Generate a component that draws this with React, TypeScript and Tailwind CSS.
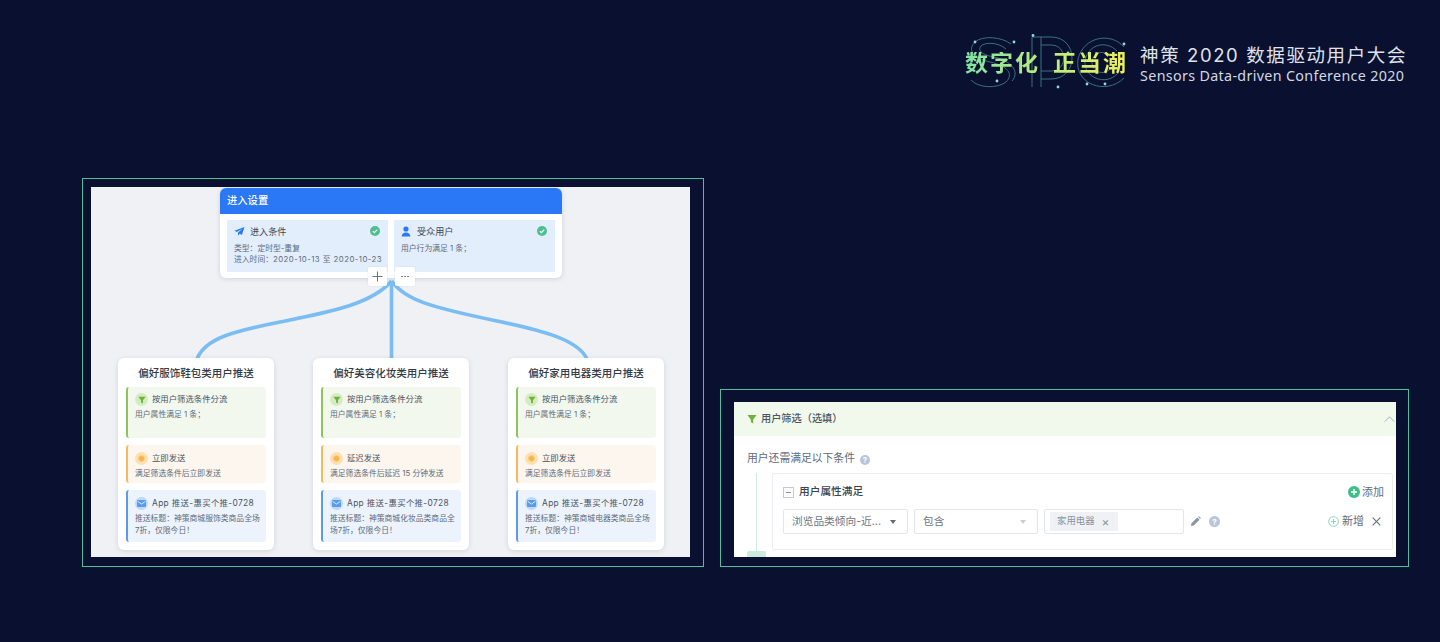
import React from "react";

const FONT = "font-['Inter','Noto_Sans_CJK_SC',sans-serif]";

function Funnel({ className }: { className: string }) {
  return (
    <svg viewBox="0 0 10 10" className={className}>
      <path d="M0.5 1h9L6.2 5.4V9.5L3.8 8V5.4z" fill="currentColor" />
    </svg>
  );
}

function Check() {
  return (
    <svg viewBox="0 0 10 10" className="w-[10px] h-[10px]">
      <circle cx="5" cy="5" r="5" fill="#4cbf8d" />
      <path d="M2.8 5.1l1.6 1.6 2.9-3" stroke="#fff" strokeWidth="1.1" fill="none" />
    </svg>
  );
}

function Help({ size }: { size: string }) {
  return (
    <span className={`${size} rounded-full bg-[#b9c5da] text-white flex items-center justify-center text-[8px] font-bold leading-none`}>
      ?
    </span>
  );
}

function Caret({ color }: { color: string }) {
  return (
    <svg viewBox="0 0 6 4" className="w-[6px] h-[4px]">
      <path d="M0 0h6L3 4z" fill={color} />
    </svg>
  );
}

function Entry({
  icon,
  title,
  lines,
}: {
  icon: React.ReactNode;
  title: string;
  lines: React.ReactNode[];
}) {
  return (
    <div className="w-[161px] h-[52px] bg-[#e3eefc] px-[7px] pt-[5px]">
      <div className="flex items-center h-[13px]">
        <span className="w-[16px] flex justify-start">{icon}</span>
        <span className="text-[9.1px] text-[#3d4654] leading-none">{title}</span>
        <span className="ml-auto mr-[1px] -mt-[1px]"><Check /></span>
      </div>
      <div className="mt-[5px] text-[7.8px] leading-[11px] text-[#5f6b7a] whitespace-nowrap">
        {lines.map((l, i) => (
          <div key={i}>{l}</div>
        ))}
      </div>
    </div>
  );
}

function Step({
  tone,
  height,
  icon,
  title,
  desc,
}: {
  tone: "green" | "orange" | "blue";
  height: string;
  icon: React.ReactNode;
  title: React.ReactNode;
  desc: string;
}) {
  const box =
    tone === "green"
      ? "bg-[#f3f8ee] border-[#8ec45c] pt-[6px]"
      : tone === "orange"
      ? "bg-[#fdf6ee] border-[#f5b95c] pt-[7px]"
      : "bg-[#ecf3fc] border-[#5c9be8] pt-[7px]";
  const circle =
    tone === "green" ? "bg-[#d5ecc2]" : tone === "orange" ? "bg-[#fde0b0]" : "bg-[#bcd8fa]";
  return (
    <div className={`${height} ${box} border-l-2 rounded-[3px] pl-[7px] pr-[4px]`}>
      <div className="flex items-center h-[13px]">
        <span className={`w-[13px] h-[13px] rounded-full flex items-center justify-center ${circle}`}>{icon}</span>
        <span className="ml-[4px] text-[8.4px] leading-none text-[#4a5462] whitespace-nowrap">{title}</span>
      </div>
      <div className="mt-[2px] w-[127px] text-[7.8px] leading-[12px] text-[#5f6b7a]">{desc}</div>
    </div>
  );
}

const FunnelIcon = <Funnel className="w-[8px] h-[8px] text-[#6fb23a]" />;
const DotIcon = (
  <span className="w-[7px] h-[7px] rounded-full bg-[#f6b44a] border border-[#f9cf87]" />
);
const MailIcon = (
  <svg viewBox="0 0 9 7" className="w-[9px] h-[7px]">
    <rect width="9" height="7" rx="1" fill="#5c9be8" />
    <path d="M0.6 1.4L4.5 4l3.9-2.6" stroke="#fff" strokeWidth="0.8" fill="none" />
  </svg>
);

function Branch({ title, send, sendDesc, push }: { title: string; send: string; sendDesc: string; push: string }) {
  return (
    <div className="w-[156px] h-[192px] bg-white rounded-[6px] shadow-[0_1px_5px_rgba(60,70,90,0.16)] px-[8px]">
      <div className="h-[29px] pt-[2px] flex items-center justify-center text-[10.5px] font-medium text-[#333b47] whitespace-nowrap">
        {title}
      </div>
      <div className="flex flex-col gap-[7px]">
        <Step tone="green" height="h-[51px]" icon={FunnelIcon} title="按用户筛选条件分流" desc="用户属性满足 1 条；" />
        <Step tone="orange" height="h-[38px]" icon={DotIcon} title={send} desc={sendDesc} />
        <Step
          tone="blue"
          height="h-[52px]"
          icon={MailIcon}
          title={<span className="tracking-[0.35px]">App 推送-惠买个推-0728</span>}
          desc={push}
        />
      </div>
    </div>
  );
}

function Flow() {
  return (
    <div className="relative w-[599px] h-[370px] bg-[#eff1f5] overflow-hidden pt-[1px]">
      <svg viewBox="91 187 599 370" className="absolute inset-0 w-[599px] h-[370px]" fill="none" stroke="#7bbdf3" strokeWidth="3.6">
        <path d="M391.5 281C372 304 330 312 280 322C235 331 205 338 197 359" />
        <path d="M391.5 281V359" />
        <path d="M391.5 281C405 300 430 307 497 321C545 331 578 340 587 359" />
      </svg>
      <div className="relative ml-[129px] w-[342px] h-[90px] bg-white rounded-[6px] shadow-[0_1px_5px_rgba(60,70,90,0.18)]">
        <div className="h-[26px] bg-[#2b78f6] rounded-t-[6px] px-[7px] flex items-center text-[10.3px] font-medium text-white">
          进入设置
        </div>
        <div className="flex gap-[6px] px-[7px] pt-[6px]">
          <Entry
            icon={
              <svg viewBox="0 0 12 10" className="w-[11px] h-[9px]">
                <path d="M11.5 0L0.5 4.2l2.6 1.4L9 2 4.3 6.4V9.6l1.9-2.2 2.5 1.5z" fill="#2b78f6" />
              </svg>
            }
            title="进入条件"
            lines={[
              "类型：定时型-重复",
              <>
                进入时间：<span className="tracking-[0.45px]">2020-10-13 至 2020-10-23</span>
              </>,
            ]}
          />
          <Entry
            icon={
              <svg viewBox="0 0 10 11" className="w-[10px] h-[11px]">
                <circle cx="5" cy="3" r="2.6" fill="#2b78f6" />
                <path d="M0.6 10.5C0.8 7.6 2.6 6.4 5 6.4s4.2 1.2 4.4 4.1z" fill="#2b78f6" />
              </svg>
            }
            title="受众用户"
            lines={["用户行为满足 1 条；"]}
          />
        </div>
        <div className="absolute left-[148px] top-[79px] w-[19px] h-[19px] bg-white rounded-[2px] flex items-center justify-center shadow-[0_0_2px_rgba(60,70,90,0.12)]">
          <svg viewBox="0 0 11 11" className="w-[11px] h-[11px]">
            <path d="M5.5 0.5v10M0.5 5.5h10" stroke="#6b7583" strokeWidth="1" />
          </svg>
        </div>
        <div className="absolute left-[175px] top-[79px] w-[20px] h-[19px] bg-white rounded-[2px] flex items-center justify-center gap-[1.5px] shadow-[0_0_2px_rgba(60,70,90,0.12)]">
          <span className="w-[1.5px] h-[1.5px] bg-[#6b7583] rounded-full" />
          <span className="w-[1.5px] h-[1.5px] bg-[#6b7583] rounded-full" />
          <span className="w-[1.5px] h-[1.5px] bg-[#6b7583] rounded-full" />
        </div>
      </div>
      <div className="relative mt-[80px] ml-[27px] flex gap-[39px]">
        <Branch
          title="偏好服饰鞋包类用户推送"
          send="立即发送"
          sendDesc="满足筛选条件后立即发送"
          push="推送标题：神策商城服饰类商品全场7折，仅限今日！"
        />
        <Branch
          title="偏好美容化妆类用户推送"
          send="延迟发送"
          sendDesc="满足筛选条件后延迟 15 分钟发送"
          push="推送标题：神策商城化妆品类商品全场7折，仅限今日！"
        />
        <Branch
          title="偏好家用电器类用户推送"
          send="立即发送"
          sendDesc="满足筛选条件后立即发送"
          push="推送标题：神策商城电器类商品全场7折，仅限今日！"
        />
      </div>
    </div>
  );
}

function Filter() {
  return (
    <div className="relative w-[662px] h-[155px] bg-white overflow-hidden">
      <div className="h-[34px] bg-[#f1f8ec] flex items-center pl-[13px] pr-[1px]">
        <Funnel className="w-[10px] h-[10px] text-[#6fb23a]" />
        <span className="ml-[4px] text-[10.2px] font-medium text-[#4a5462]">用户筛选（选填）</span>
        <svg viewBox="0 0 12 7" className="ml-auto w-[11px] h-[6px]">
          <path d="M0.5 6.5L6 1l5.5 5.5" stroke="#9aa3af" strokeWidth="1" fill="none" />
        </svg>
      </div>
      <div className="h-[37px] pt-[10px] pl-[13px] flex items-center">
        <span className="text-[10.8px] text-[#5f6b7a]">用户还需满足以下条件</span>
        <span className="ml-[5px]"><Help size="w-[10px] h-[10px]" /></span>
      </div>
      <div className="flex pl-[13px]">
        <div className="w-[19px] h-[84px] flex flex-col items-center">
          <div className="w-px h-[78px] bg-[#d3ecdf]" />
          <div className="w-[19px] h-[6px] bg-[#cdeade] rounded-t-[2px]" />
        </div>
        <div className="ml-[6px] w-[621px] h-[77px] border border-[#eceef3] rounded-[2px] pl-[10px] pr-[8px]">
          <div className="h-[35px] pt-[1px] flex items-center">
            <span className="w-[11px] h-[11px] border border-[#c3cad4] flex items-center justify-center">
              <span className="w-[5px] h-px bg-[#8a94a4]" />
            </span>
            <span className="ml-[5px] text-[10.7px] font-medium text-[#3a424e]">用户属性满足</span>
            <svg viewBox="0 0 12 12" className="ml-auto w-[12px] h-[12px]">
              <circle cx="6" cy="6" r="6" fill="#3dbf8a" />
              <path d="M6 3v6M3 6h6" stroke="#fff" strokeWidth="1.4" />
            </svg>
            <span className="ml-[2px] text-[11px] text-[#5f6b7a]">添加</span>
          </div>
          <div className="flex items-center h-[25px] text-[10.7px] text-[#6b7583]">
            <div className="w-[125px] h-[25px] border border-[#e3e6ec] rounded-[2px] pl-[8px] pr-[11px] pt-[1px] flex items-center justify-between">
              <span>浏览品类倾向-近...</span>
              <Caret color="#5f6b7a" />
            </div>
            <div className="ml-[6px] w-[124px] h-[25px] border border-[#e3e6ec] rounded-[2px] pl-[8px] pr-[11px] pt-[1px] flex items-center justify-between">
              <span>包含</span>
              <Caret color="#c9ced6" />
            </div>
            <div className="ml-[6px] w-[140px] h-[25px] border border-[#e3e6ec] rounded-[2px] pl-[5px] flex items-center">
              <span className="w-[68px] h-[19px] bg-[#eff1f5] pl-[7px] flex items-center text-[9.4px] text-[#8a94a4]">
                家用电器
                <span className="ml-[7px] text-[12px] leading-none">×</span>
              </span>
            </div>
            <svg viewBox="0 0 12 12" className="ml-[6px] w-[11px] h-[11px]">
              <path d="M1 11l.6-3L8 1.6 10.4 4 4 10.4zM8.8 0.9l1-.7 2 2-.8 1z" fill="#8a94a4" />
            </svg>
            <span className="ml-[8px]"><Help size="w-[11px] h-[11px]" /></span>
            <svg viewBox="0 0 12 12" className="ml-auto w-[11px] h-[11px]">
              <circle cx="6" cy="6" r="5.3" stroke="#7fd4b0" fill="none" />
              <path d="M6 3.2v5.6M3.2 6h5.6" stroke="#7fd4b0" />
            </svg>
            <span className="ml-[3px] text-[11px] text-[#5f6b7a]">新增</span>
            <svg viewBox="0 0 9 9" className="ml-[8px] mr-[3px] w-[9px] h-[9px]">
              <path d="M0.7 0.7l7.6 7.6M8.3 0.7L0.7 8.3" stroke="#6b7583" strokeWidth="1.2" />
            </svg>
          </div>
        </div>
      </div>
    </div>
  );
}

function Logo() {
  return (
    <div className="relative w-[162px] h-[56px] flex items-center justify-end pt-[2px]">
      <svg viewBox="0 0 162 56" className="absolute inset-0 w-[162px] h-[56px]" fill="none" stroke="#3a7080" strokeWidth="1">
        <path d="M45 10C36 3 17 1 9 8C1 16 7 24 24 28C42 32 48 40 40 48C31 55 12 54 5 46" />
        <path d="M40 15C32 8 19 8 15 12C11 17 17 21 28 23C46 27 54 38 46 47" />
        <path d="M66 3V53M75 3V53M66 3H85C113 3 113 45 85 45H75" />
        <path d="M75 11H85C102 11 102 37 85 37H75" />
        <path d="M158 13C145 -2 118 2 112 25C108 50 140 62 158 44" />
        <path d="M151 17C140 6 123 10 119 26C117 44 140 52 151 40" />
        <path d="M144 22C136 15 127 19 126 28C126 38 138 42 144 35" />
        <g fill="#8fdcd8" stroke="none">
          <circle cx="9" cy="8" r="1.4" />
          <circle cx="48" cy="8" r="1.4" />
          <circle cx="31" cy="47" r="1.4" />
          <circle cx="67" cy="1.5" r="1.4" />
          <circle cx="92" cy="53" r="1.4" />
          <circle cx="102" cy="19" r="1.4" />
          <circle cx="139" cy="50" r="1.4" />
          <circle cx="158" cy="10" r="1.4" />
          <circle cx="121" cy="50" r="1.4" />
        </g>
      </svg>
      <span className="relative flex gap-[13px] text-[23px] leading-none font-bold whitespace-pre tracking-[2px] bg-gradient-to-r from-[#7fe3a4] via-[#bdea7a] to-[#eef05a] bg-clip-text text-transparent">
        <span>数字化</span>
        <span>正当潮</span>
      </span>
    </div>
  );
}

export default function App() {
  return (
    <div className={`w-[1440px] h-[642px] bg-[#0a1030] overflow-hidden ${FONT}`}>
      <header className="h-[178px] pt-[34px] pr-[33px] flex justify-end items-start">
        <Logo />
        <div className="ml-[12px] pt-[9px] text-[#dfe2ea] whitespace-nowrap">
          <div className="text-[18.5px] leading-[24px] tracking-[1.6px]">神策 2020 数据驱动用户大会</div>
          <div className="font-['Noto_Sans',sans-serif] text-[14.3px] leading-[18px] tracking-[0.33px] text-[#d3d7e2]">
            Sensors Data-driven Conference 2020
          </div>
        </div>
      </header>
      <main className="flex items-end pl-[82px] gap-[16px]">
        <section className="w-[622px] h-[389px] border border-[#52bd9e] pl-[8px] pt-[8px]">
          <Flow />
        </section>
        <section className="w-[689px] h-[178px] border border-[#52bd9e] pl-[13px] pt-[12px]">
          <Filter />
        </section>
      </main>
    </div>
  );
}
